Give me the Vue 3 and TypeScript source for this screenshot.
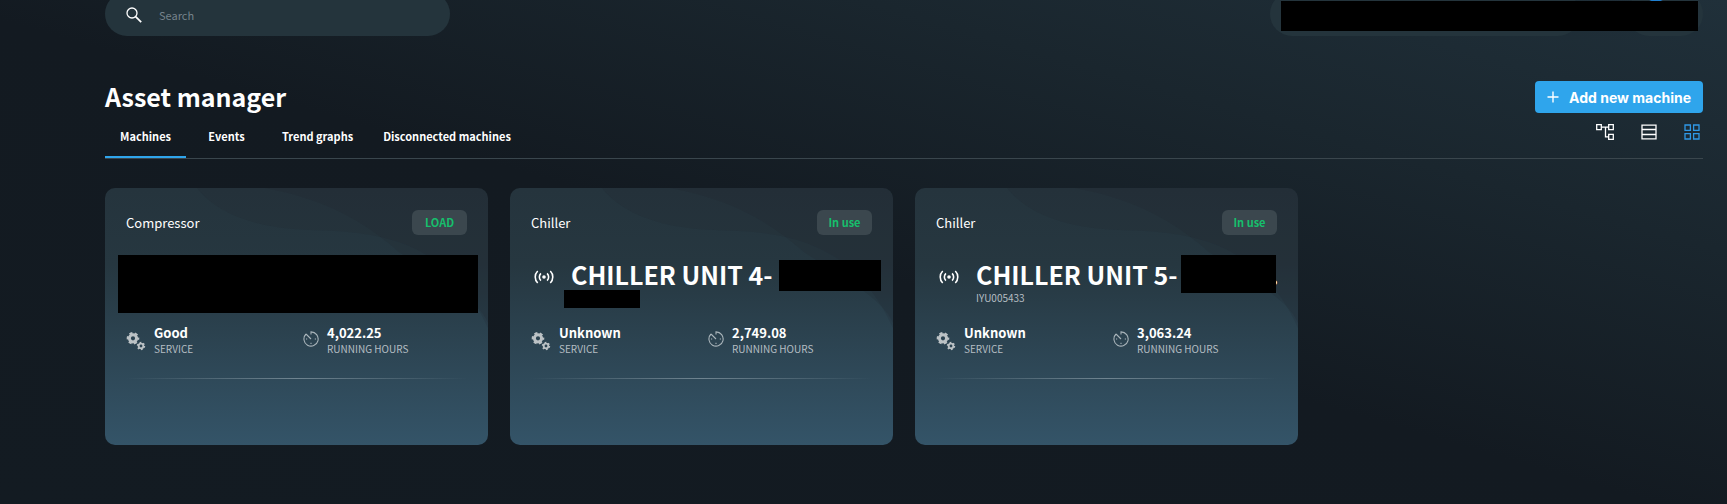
<script setup lang="ts">
interface Machine {
  id: number
  type: string
  status: string
  name?: string
  serial?: string
  suffix?: string
  mask: 'all' | 'serial' | 'name'
  service: string
  hours: string
}

const tabs: string[] = ['Machines', 'Events', 'Trend graphs', 'Disconnected machines']

const machines: Machine[] = [
  { id: 1, type: 'Compressor', status: 'LOAD', mask: 'all', service: 'Good', hours: '4,022.25' },
  { id: 2, type: 'Chiller', status: 'In use', name: 'CHILLER UNIT 4-', mask: 'serial', service: 'Unknown', hours: '2,749.08' },
  { id: 3, type: 'Chiller', status: 'In use', name: 'CHILLER UNIT 5-', serial: 'IYU005433', suffix: '.', mask: 'name', service: 'Unknown', hours: '3,063.24' },
]
</script>

<template>
  <div class="page">
    <header class="topbar">
      <label class="search">
        <svg width="18" height="18" viewBox="0 0 18 18" fill="none" stroke="#fff" aria-hidden="true">
          <circle cx="7" cy="7" r="5" stroke-width="1.3" />
          <path d="M10.6 10.6 16.2 16.2" stroke-width="1.7" />
        </svg>
        <input type="search" placeholder="Search" aria-label="Search" />
      </label>
      <div class="account">
        <div class="pill pill-user"></div>
        <div class="pill pill-tools"><span class="dot"></span></div>
        <div class="account-mask"></div>
      </div>
    </header>

    <main>
      <div class="heading">
        <h1>Asset manager</h1>
        <button class="add" type="button">
          <svg width="12" height="12" viewBox="0 0 12 12" stroke="#fff" stroke-width="1.4" aria-hidden="true">
            <path d="M6 .5v11M.5 6h11" />
          </svg>
          Add new machine
        </button>
      </div>

      <div class="toolbar">
        <nav class="tabs">
          <a v-for="(tab, i) in tabs" :key="tab" href="#" :class="{ active: i === 0 }">{{ tab }}</a>
        </nav>
        <div class="views">
          <button type="button" aria-label="Tree view">
            <svg width="18" height="18" viewBox="0 0 18 18" fill="none" stroke="#fff" stroke-width="1.3">
              <path d="M.7 1.7h4.6v5H.7zM12.7 1.7h4.6v5h-4.6zM12.7 11.3h4.6v5h-4.6zM5.3 4.2h7.4M9.5 4.2v9.6h3.2" />
            </svg>
          </button>
          <button type="button" aria-label="List view">
            <svg width="16" height="18" viewBox="0 0 16 18" fill="none" stroke="#fff" stroke-width="1.3">
              <path d="M1 2.2h14v13.6H1zM1 6.5h14M1 11.5h14" />
            </svg>
          </button>
          <button type="button" aria-label="Grid view">
            <svg width="16" height="18" viewBox="0 0 16 18" fill="none" stroke="#2f98e6" stroke-width="1.3">
              <path d="M1 2h5.4v5.4H1zM9.6 2H15v5.4H9.6zM1 10.6h5.4V16H1zM9.6 10.6H15V16H9.6z" />
            </svg>
          </button>
        </div>
      </div>

      <section class="cards">
        <article v-for="m in machines" :key="m.id" class="card">
          <svg class="waves" viewBox="0 0 383 257" preserveAspectRatio="none" aria-hidden="true">
            <path d="M92 0C108 20 140 40 205 42C262 44 340 45 383 140V0Z" />
            <path d="M160 0C225 12 262 36 295 65C345 95 375 115 383 135V0Z" />
          </svg>
          <div class="card-head">
            <span>{{ m.type }}</span>
            <span class="badge">{{ m.status }}</span>
          </div>

          <div class="identity">
            <div v-if="m.mask === 'all'" class="mask mask-all"></div>
            <template v-else>
              <svg class="signal" width="20" height="14" viewBox="0 0 20 14" fill="none" stroke="#fff" stroke-width="1.6" aria-hidden="true">
                <circle cx="10" cy="7" r="1.8" fill="#fff" stroke="none" />
                <path d="M6.9 3.4a5 5 0 0 0 0 7.2M13.1 3.4a5 5 0 0 1 0 7.2M3.7 1a8.5 8.5 0 0 0 0 12M16.3 1a8.5 8.5 0 0 1 0 12" />
              </svg>
              <div class="names">
                <h2>
                  <span>{{ m.name }}</span>
                  <i class="mask" :class="m.mask === 'name' ? 'mask-tall' : 'mask-wide'"></i>
                  <span v-if="m.suffix" class="suffix">{{ m.suffix }}</span>
                </h2>
                <div v-if="m.serial" class="serial">{{ m.serial }}</div>
                <div v-else class="mask mask-serial"></div>
              </div>
            </template>
          </div>

          <div class="metrics">
            <div class="metric">
              <svg width="20" height="20" viewBox="0 0 20 20" fill="none" stroke="#bcc2c5" aria-hidden="true">
                <circle cx="7" cy="7.3" r="3.6" stroke-width="3" />
                <circle cx="7" cy="7.3" r="5.3" stroke-width="2" stroke-dasharray="3 2.55" stroke-dashoffset="1.5" />
                <circle cx="15" cy="15" r="2.3" stroke-width="1.8" />
                <circle cx="15" cy="15" r="3.5" stroke-width="1.4" stroke-dasharray="1.7 1.965" />
              </svg>
              <div>
                <strong>{{ m.service }}</strong>
                <span>SERVICE</span>
              </div>
            </div>
            <div class="metric hours">
              <svg width="16" height="16" viewBox="0 0 16 16" fill="none" stroke="#a9b4ba" stroke-width="1.1" aria-hidden="true">
                <path d="M8 3.6V.9A7.1 7.1 0 1 1 3 3M3 3l5 5M13 8h-1.2M4.2 8H3M8 13v-1.2" />
              </svg>
              <div>
                <strong>{{ m.hours }}</strong>
                <span>RUNNING HOURS</span>
              </div>
            </div>
          </div>
          <div class="rule"></div>
        </article>
      </section>
    </main>
  </div>
</template>

<style scoped>
.page {
  box-sizing: border-box;
  min-height: 100vh;
  overflow: hidden;
  padding: 0 24px 48px 105px;
  color: #fff;
  font-family: "Noto Sans CJK SC", "Open Sans", sans-serif;
  background: linear-gradient(to bottom left, #20303a, #1a262e 25%, #131a21 52%, #131b22);
}
.topbar {
  display: flex;
  justify-content: space-between;
  height: 44px;
  margin-top: -8px;
}
.search {
  display: flex;
  align-items: center;
  box-sizing: border-box;
  width: 345px;
  padding: 2px 20px 0;
  gap: 16px;
  border-radius: 22px;
  background: #24343c;
}
.search input {
  flex: 1;
  min-width: 0;
  padding: 0;
  border: 0;
  outline: 0;
  background: none;
  color: #fff;
  font: 11px "Noto Sans CJK SC", sans-serif;
}
.search input::placeholder {
  color: #75828a;
}
.account {
  position: relative;
  display: flex;
  justify-content: space-between;
  width: 433px;
}
.pill {
  border-radius: 22px;
  background: #24343c;
}
.pill-user {
  width: 310px;
}
.pill-tools {
  width: 76px;
}
.dot {
  display: block;
  width: 24px;
  height: 24px;
  margin: -14px 0 0 17px;
  border-radius: 50%;
  background: #1f7fd0;
}
.account-mask {
  position: absolute;
  inset: 9px 5px 5px 11px;
  background: #000;
}
.heading {
  display: flex;
  justify-content: space-between;
  align-items: flex-start;
  height: 32px;
  margin-top: 45px;
}
h1 {
  margin: 0;
  font-size: 25px;
  font-weight: 700;
  line-height: 30px;
}
.add {
  display: flex;
  align-items: center;
  gap: 10px;
  height: 32px;
  padding: 0 12px;
  border: 0;
  border-radius: 4px;
  background: #2fa5ec;
  color: #fff;
  font: 700 14px Inter, sans-serif;
}
.toolbar {
  display: flex;
  justify-content: space-between;
  height: 45px;
  border-bottom: 1px solid #3a464d;
}
.tabs {
  display: flex;
}
.tabs a {
  box-sizing: border-box;
  min-width: 81px;
  padding: 13px 15px 0;
  border-bottom: 2px solid transparent;
  color: #fff;
  font-size: 11px;
  font-weight: 700;
  line-height: 20px;
  text-align: center;
  text-decoration: none;
}
.tabs a.active {
  border-color: #2fa5ec;
}
.views {
  display: flex;
  align-items: flex-start;
  gap: 27px;
  padding: 10px 3px 0 0;
}
.views button {
  display: flex;
  padding: 0;
  border: 0;
  background: none;
}
.cards {
  display: grid;
  grid-template-columns: repeat(4, 1fr);
  gap: 22px;
  margin-top: 29px;
}
.card {
  position: relative;
  box-sizing: border-box;
  min-height: 257px;
  padding: 22px 21px;
  overflow: hidden;
  border-radius: 10px;
  background: linear-gradient(#25343d, #263740 30%, #345468);
}
.waves {
  position: absolute;
  inset: 0;
  width: 100%;
  height: 100%;
  fill: rgba(28, 32, 38, 0.13);
}
.card > div {
  position: relative;
}
.card-head {
  display: flex;
  justify-content: space-between;
  align-items: center;
  height: 25px;
  font-size: 13px;
}
.badge {
  width: 55px;
  border-radius: 6px;
  background: #3b474e;
  color: #16bf6c;
  font-size: 11px;
  font-weight: 700;
  line-height: 25px;
  text-align: center;
}
.identity {
  display: flex;
  align-items: flex-start;
  height: 60px;
  margin-top: 20px;
}
.mask {
  flex: none;
  background: #000;
}
.mask-all {
  flex: 1;
  height: 58px;
  margin: 0 -11px 0 -8px;
}
.signal {
  flex: none;
  margin: 15px 17px 0 3px;
}
h2 {
  display: flex;
  align-items: center;
  height: 38px;
  margin: 0;
  font-size: 25px;
  font-weight: 700;
  line-height: 38px;
  white-space: nowrap;
}
.mask-wide {
  width: 102px;
  height: 31px;
  margin: 2px 0 0 6px;
}
.mask-tall {
  z-index: 1;
  width: 95px;
  height: 38px;
  margin-left: 3px;
}
.suffix {
  margin-left: -5px;
}
.mask-serial {
  width: 76px;
  height: 18px;
  margin: -3px 0 0 -7px;
}
.serial {
  color: #b5bec3;
  font-size: 10px;
  line-height: 10px;
}
.metrics {
  display: grid;
  grid-template-columns: 175px 1fr;
  margin-top: 10px;
}
.metric {
  display: flex;
  gap: 8px;
}
.metric svg {
  flex: none;
  margin-top: 6px;
}
.hours {
  padding-left: 2px;
}
.metric strong,
.metric span {
  display: block;
  line-height: 16px;
}
.metric strong {
  font-size: 13px;
  font-weight: 700;
}
.metric span {
  color: #b5bec3;
  font-size: 10px;
}
.rule {
  height: 1px;
  margin-top: 21px;
  background: linear-gradient(90deg, transparent, #6f8490 50%, transparent);
}
</style>

<style>
body {
  margin: 0;
  background: #141b21;
}
</style>
